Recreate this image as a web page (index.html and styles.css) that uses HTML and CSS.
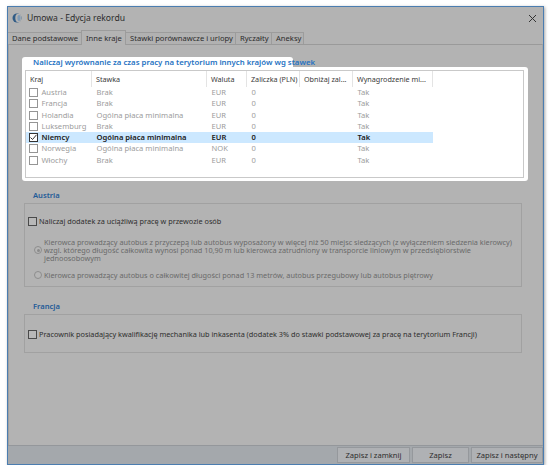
FILE: index.html
```html
<!DOCTYPE html>
<html lang="pl">
<head>
<meta charset="utf-8">
<title>Umowa - Edycja rekordu</title>
<link rel="stylesheet" href="styles.css">
</head>
<body>
<div class="window">
  <div class="titlebar">
    <svg class="app-icon" width="10" height="10" viewBox="0 0 10 10">
      <circle cx="5" cy="5" r="4.5" fill="#2f5b86"/>
      <ellipse cx="6.3" cy="5" rx="3" ry="4.2" fill="#b3b3b3"/>
      <ellipse cx="7" cy="5" rx="1.6" ry="3" fill="#7f9bb6"/>
    </svg>
    <span class="title">Umowa - Edycja rekordu</span>
    <svg class="close" width="9" height="9" viewBox="0 0 9 9"><path d="M1 1L8 8M8 1L1 8" stroke="#333" stroke-width="1"/></svg>
  </div>
  <div class="tabs">
    <div class="tab">Dane podstawowe</div>
    <div class="tab active">Inne kraje</div>
    <div class="tab">Stawki porównawcze i urlopy</div>
    <div class="tab">Ryczałty</div>
    <div class="tab">Aneksy</div>
  </div>
  <div class="page">
    <div class="hl">
      <div class="hl-label">Naliczaj wyrównanie za czas pracy na terytorium innych krajów wg stawek</div>
      <div class="hl-box">
        <div class="list">
          <div class="row head">
            <div class="hc">Kraj</div>
            <div class="hc">Stawka</div>
            <div class="hc">Waluta</div>
            <div class="hc">Zaliczka (PLN)</div>
            <div class="hc">Obniżaj zal...</div>
            <div class="hc">Wynagrodzenie mi...</div>
          </div>
          <div class="row dis"><div class="c kraj"><span class="cb"></span>Austria</div><div class="c">Brak</div><div class="c">EUR</div><div class="c">0</div><div class="c"></div><div class="c">Tak</div></div>
          <div class="row dis"><div class="c kraj"><span class="cb"></span>Francja</div><div class="c">Brak</div><div class="c">EUR</div><div class="c">0</div><div class="c"></div><div class="c">Tak</div></div>
          <div class="row dis"><div class="c kraj"><span class="cb"></span>Holandia</div><div class="c">Ogólna płaca minimalna</div><div class="c">EUR</div><div class="c">0</div><div class="c"></div><div class="c">Tak</div></div>
          <div class="row dis"><div class="c kraj"><span class="cb"></span>Luksemburg</div><div class="c">Brak</div><div class="c">EUR</div><div class="c">0</div><div class="c"></div><div class="c">Tak</div></div>
          <div class="row sel"><div class="c kraj"><span class="cb on"><svg width="9" height="9" viewBox="0 0 9 9"><path d="M1.5 4.5L3.5 6.5L7.5 1.8" fill="none" stroke="#333" stroke-width="1"/></svg></span>Niemcy</div><div class="c">Ogólna płaca minimalna</div><div class="c">EUR</div><div class="c">0</div><div class="c"></div><div class="c">Tak</div></div>
          <div class="row dis"><div class="c kraj"><span class="cb"></span>Norwegia</div><div class="c">Ogólna płaca minimalna</div><div class="c">NOK</div><div class="c">0</div><div class="c"></div><div class="c">Tak</div></div>
          <div class="row dis"><div class="c kraj"><span class="cb"></span>Włochy</div><div class="c">Brak</div><div class="c">EUR</div><div class="c">0</div><div class="c"></div><div class="c">Tak</div></div>
        </div>
      </div>
    </div>

    <div class="grp-label first">Austria</div>
    <div class="grp austria">
      <div class="chk-line"><span class="dcb"></span>Naliczaj dodatek za uciążliwą pracę w przewozie osób</div>
      <div class="radio-line r1">
        <span class="radio on"></span>
        <span class="rtext">Kierowca prowadzący autobus z przyczepą lub autobus wyposażony w więcej niż 50 miejsc siedzących (z wyłączeniem siedzenia kierowcy)<br>wzgl. którego długość całkowita wynosi ponad 10,90 m lub kierowca zatrudniony w transporcie liniowym w przedsiębiorstwie<br>jednoosobowym</span>
      </div>
      <div class="radio-line r2">
        <span class="radio"></span>
        <span class="rtext">Kierowca prowadzący autobus o całkowitej długości ponad 13 metrów, autobus przegubowy lub autobus piętrowy</span>
      </div>
    </div>

    <div class="grp-label">Francja</div>
    <div class="grp francja">
      <div class="chk-line"><span class="dcb"></span>Pracownik posiadający kwalifikację mechanika lub inkasenta (dodatek 3% do stawki podstawowej za pracę na terytorium Francji)</div>
    </div>
  </div>
  <div class="footer">
    <div class="btn b1">Zapisz i zamknij</div>
    <div class="btn b2">Zapisz</div>
    <div class="btn b3">Zapisz i następny</div>
  </div>
</div>
</body>
</html>
```

FILE: styles.css
```css
* { box-sizing: border-box; }
html, body { margin: 0; padding: 0; background: #ffffff; }
body {
  font-family: "Noto Sans", "DejaVu Sans", sans-serif;
  font-size: 7.3px;
  color: #353535;
}
.window {
  margin: 6px 0 0 7px;
  width: 537px;
  height: 459px;
  border: 1px solid #4b7db0;
  background: #b3b3b3;
  box-shadow: 1px 1px 3px rgba(0,0,0,0.35);
  display: flex;
  flex-direction: column;
}
.titlebar {
  height: 22px;
  display: flex;
  align-items: center;
  padding-left: 4px;
  padding-right: 5px;
  flex: none;
}
.app-icon { margin-right: 5px; }
.title { font-size: 8.6px; color: #2c2c2c; flex: 1; }
.close { margin-right: 1px; }

.tabs {
  height: 15px;
  display: flex;
  align-items: flex-end;
  flex: none;
  position: relative;
  z-index: 1;
  font-size: 7.6px;
}
.tab {
  height: 12px;
  padding: 0 4px;
  line-height: 11px;
  border: 1px solid #9c9c9c;
  border-bottom: none;
  margin-right: -1px;
  background: #b1b1b1;
  color: #2c2c2c;
  white-space: nowrap;
}
.tab:first-child { border-left: none; width: 74px; }
.tab:nth-child(3) { width: 111px; }
.tab:nth-child(4) { width: 37px; }
.tab:nth-child(5) { width: 33px; }
.tab.active {
  height: 15px;
  width: 45px;
  line-height: 12px;
  background: #b3b3b3;
  margin-bottom: -1px;
  padding-top: 1px;
}

.page {
  flex: 1;
  border-top: 1px solid #9a9a9a;
  border-left: 1px solid #a0a0a0;
  border-right: 1px solid #a7a7a7;
  padding-left: 13px;
}

.hl { margin-top: 12px; width: 506px; }
.hl-label {
  width: 271px;
  height: 10px;
  background: #ffffff;
  border-radius: 3px 3px 0 0;
  padding-left: 11px;
  line-height: 10px;
  color: #2572c2;
  font-weight: 600;
  font-size: 7.8px;
  white-space: nowrap;
}
.hl-box {
  height: 114px;
  background: #ffffff;
  border-radius: 0 3px 3px 3px;
  padding: 3px 4px 3px 3px;
}
.list {
  height: 108px;
  border: 1px solid #c9c9c9;
  font-size: 7.6px;
}
.row {
  display: grid;
  grid-template-columns: 66px 115px 40px 53px 53px 80px;
  width: 407px;
  height: 11.25px;
  align-items: center;
  white-space: nowrap;
}
.row.head { height: 16px; align-items: stretch; font-size: 7.2px; }
.hc {
  border-right: 1px solid #e4e4e4;
  padding-left: 4px;
  line-height: 16px;
  color: #3a3a3a;
  overflow: hidden;
}
.c { padding-left: 4.5px; overflow: hidden; line-height: 11px; }
.row.dis { color: #9c9c9c; }
.row.sel { background: #cce8ff; color: #1a1a1a; font-weight: 600; }
.c.kraj { padding-left: 2.5px; display: flex; align-items: center; }
.cb {
  width: 9px; height: 9px;
  border: 1px solid #959595;
  background: #fff;
  margin-right: 4px;
  flex: none;
  display: inline-block;
}
.cb.on { border-color: #333; position: relative; }
.cb.on svg { position: absolute; left: -1px; top: -1px; }

.grp-label {
  margin-top: 14px;
  padding-left: 11px;
  height: 10px;
  line-height: 10px;
  color: #1f5b98;
  font-weight: 600;
  font-size: 7.6px;
}
.grp-label.first { margin-top: 9px; }
.grp {
  margin-top: 3px;
  margin-left: 2px;
  width: 498px;
  border: 1px solid #a1a1a1;
}
.austria { height: 84px; padding-top: 12px; }
.francja { height: 39px; padding-top: 14px; }
.chk-line {
  display: flex;
  align-items: center;
  padding-left: 3px;
  height: 10px;
  color: #2e2e2e;
  white-space: nowrap;
}
.dcb {
  width: 9px; height: 9px;
  border: 1px solid #4a4a4a;
  background: #b8b8b8;
  margin-right: 2px;
  flex: none;
}
.radio-line {
  display: flex;
  align-items: center;
  padding-left: 9px;
  color: #6a6a6a;
  white-space: nowrap;
}
.r1 { margin-top: 12px; }
.r2 { margin-top: 8.4px; }
.rtext { line-height: 8.2px; }
.radio {
  width: 8px; height: 8px;
  border-radius: 50%;
  border: 1px solid #8d8d8d;
  background: #b6b6b6;
  margin-right: 2px;
  flex: none;
  position: relative;
}
.radio.on::after {
  content: "";
  position: absolute;
  left: 1.5px; top: 1.5px;
  width: 3px; height: 3px;
  border-radius: 50%;
  background: #8a8a8a;
}

.footer {
  height: 19px;
  flex: none;
  background: #a4a8ac;
  border-top: 1px solid #94979b;
  display: flex;
  justify-content: flex-end;
  align-items: center;
  gap: 2px;
  font-size: 7.6px;
}
.btn {
  height: 16px;
  border: 1px solid #95989c;
  background: #afb1b4;
  color: #2e2e2e;
  text-align: center;
  line-height: 14px;
}
.b1 { width: 73px; }
.b2 { width: 57px; }
.b3 { width: 72px; }
```
